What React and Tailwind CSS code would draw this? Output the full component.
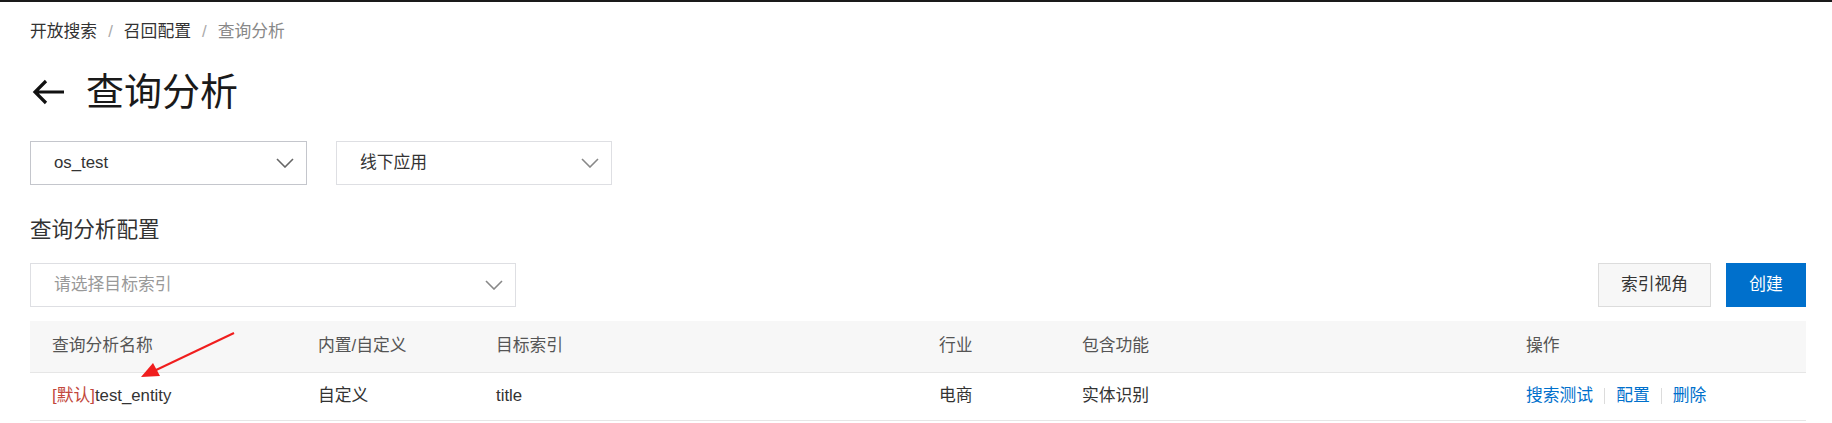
import React from "react";

const font = "font-['Liberation_Sans','Noto_Sans_CJK_SC',sans-serif]";

function Chevron({ color = "#777" }) {
  return (
    <svg width="18" height="10" viewBox="0 0 18 10" fill="none">
      <path d="M1 1l8 8 8-8" stroke={color} strokeWidth="1.6" />
    </svg>
  );
}

function Select({ value, placeholder, width, dark }) {
  return (
    <div
      className={`h-[44px] ${width} flex items-center justify-between pl-[23px] pr-[12px] bg-white border ${
        dark ? "border-[#c4c6cc]" : "border-[#dedfe3]"
      }`}
    >
      <span className={`text-[16.8px] leading-none ${value ? "text-[#333]" : "text-[#999]"}`}>
        {value || placeholder}
      </span>
      <Chevron color={dark ? "#666" : "#888"} />
    </div>
  );
}

const cols = "grid grid-cols-[266px_178px_443px_143px_444px_1fr]";

export default function App() {
  return (
    <div className={`relative w-[1832px] h-[423px] overflow-hidden bg-white ${font}`}>
      <div className="h-[2px] bg-[#1a1a1a]" />
      <div className="pl-[30px] pr-[26px]">
        {/* breadcrumb */}
        <nav className="h-[60px] flex items-center text-[16.8px] leading-none">
          <span className="text-[#333]">开放搜索</span>
          <span className="mx-[11px] text-[#aaa]">/</span>
          <span className="text-[#333]">召回配置</span>
          <span className="mx-[11px] text-[#aaa]">/</span>
          <span className="text-[#888]">查询分析</span>
        </nav>

        {/* title */}
        <div className="h-[60px] flex items-center">
          <svg width="34" height="26" viewBox="0 0 34 26" fill="none" className="ml-[2px]">
            <path d="M32 13H3M14 2L3 13l11 11" stroke="#111" strokeWidth="3.2" />
          </svg>
          <h1 className="ml-[20px] text-[38px] leading-none text-[#1a1a1a]">查询分析</h1>
        </div>

        <div className="mt-[19px] flex gap-[29px]">
          <Select value="os_test" width="w-[277px]" dark />
          <Select value="线下应用" width="w-[276px]" />
        </div>

        <h2 className="mt-[28px] mb-[16px] h-[34px] flex items-center text-[21.6px] leading-none text-[#333]">
          查询分析配置
        </h2>

        <div className="flex items-center">
          <Select placeholder="请选择目标索引" width="w-[486px]" />
          <div className="ml-auto flex gap-[15px]">
            <button className="h-[44px] w-[113px] bg-[#f7f7f7] border border-[#dcdcdc] text-[16.8px] text-[#333]">
              索引视角
            </button>
            <button className="h-[44px] w-[80px] bg-[#0070cc] text-[16.8px] text-white">
              创建
            </button>
          </div>
        </div>

        {/* table */}
        <div className="mt-[14px] text-[16.8px] leading-none">
          <div className={`${cols} h-[52px] items-center bg-[#f7f7f7] border-b border-[#e6e6e6] text-[#555]`}>
            {["查询分析名称", "内置/自定义", "目标索引", "行业", "包含功能", "操作"].map(h => (
              <div key={h} className="pl-[22px]">{h}</div>
            ))}
          </div>
          <div className={`${cols} h-[48px] items-center border-b border-[#e6e6e6] text-[#333]`}>
            <div className="pl-[22px]">
              <span className="text-[#c2473c]">[默认]</span>test_entity
            </div>
            <div className="pl-[22px]">自定义</div>
            <div className="pl-[22px]">title</div>
            <div className="pl-[22px]">电商</div>
            <div className="pl-[22px]">实体识别</div>
            <div className="pl-[22px] flex items-center text-[#0070cc]">
              <span>搜索测试</span>
              <span className="mx-[11px] h-[16px] w-px bg-[#dcdcdc]" />
              <span>配置</span>
              <span className="mx-[11px] h-[16px] w-px bg-[#dcdcdc]" />
              <span>删除</span>
            </div>
          </div>
        </div>
      </div>

      {/* annotation arrow */}
      <svg className="absolute left-0 top-0 pointer-events-none" width="1832" height="423">
        <line x1="234" y1="333" x2="154" y2="371" stroke="#f01e1e" strokeWidth="2" />
        <polygon points="141,377 160,376 153,363" fill="#f01e1e" />
      </svg>
    </div>
  );
}
